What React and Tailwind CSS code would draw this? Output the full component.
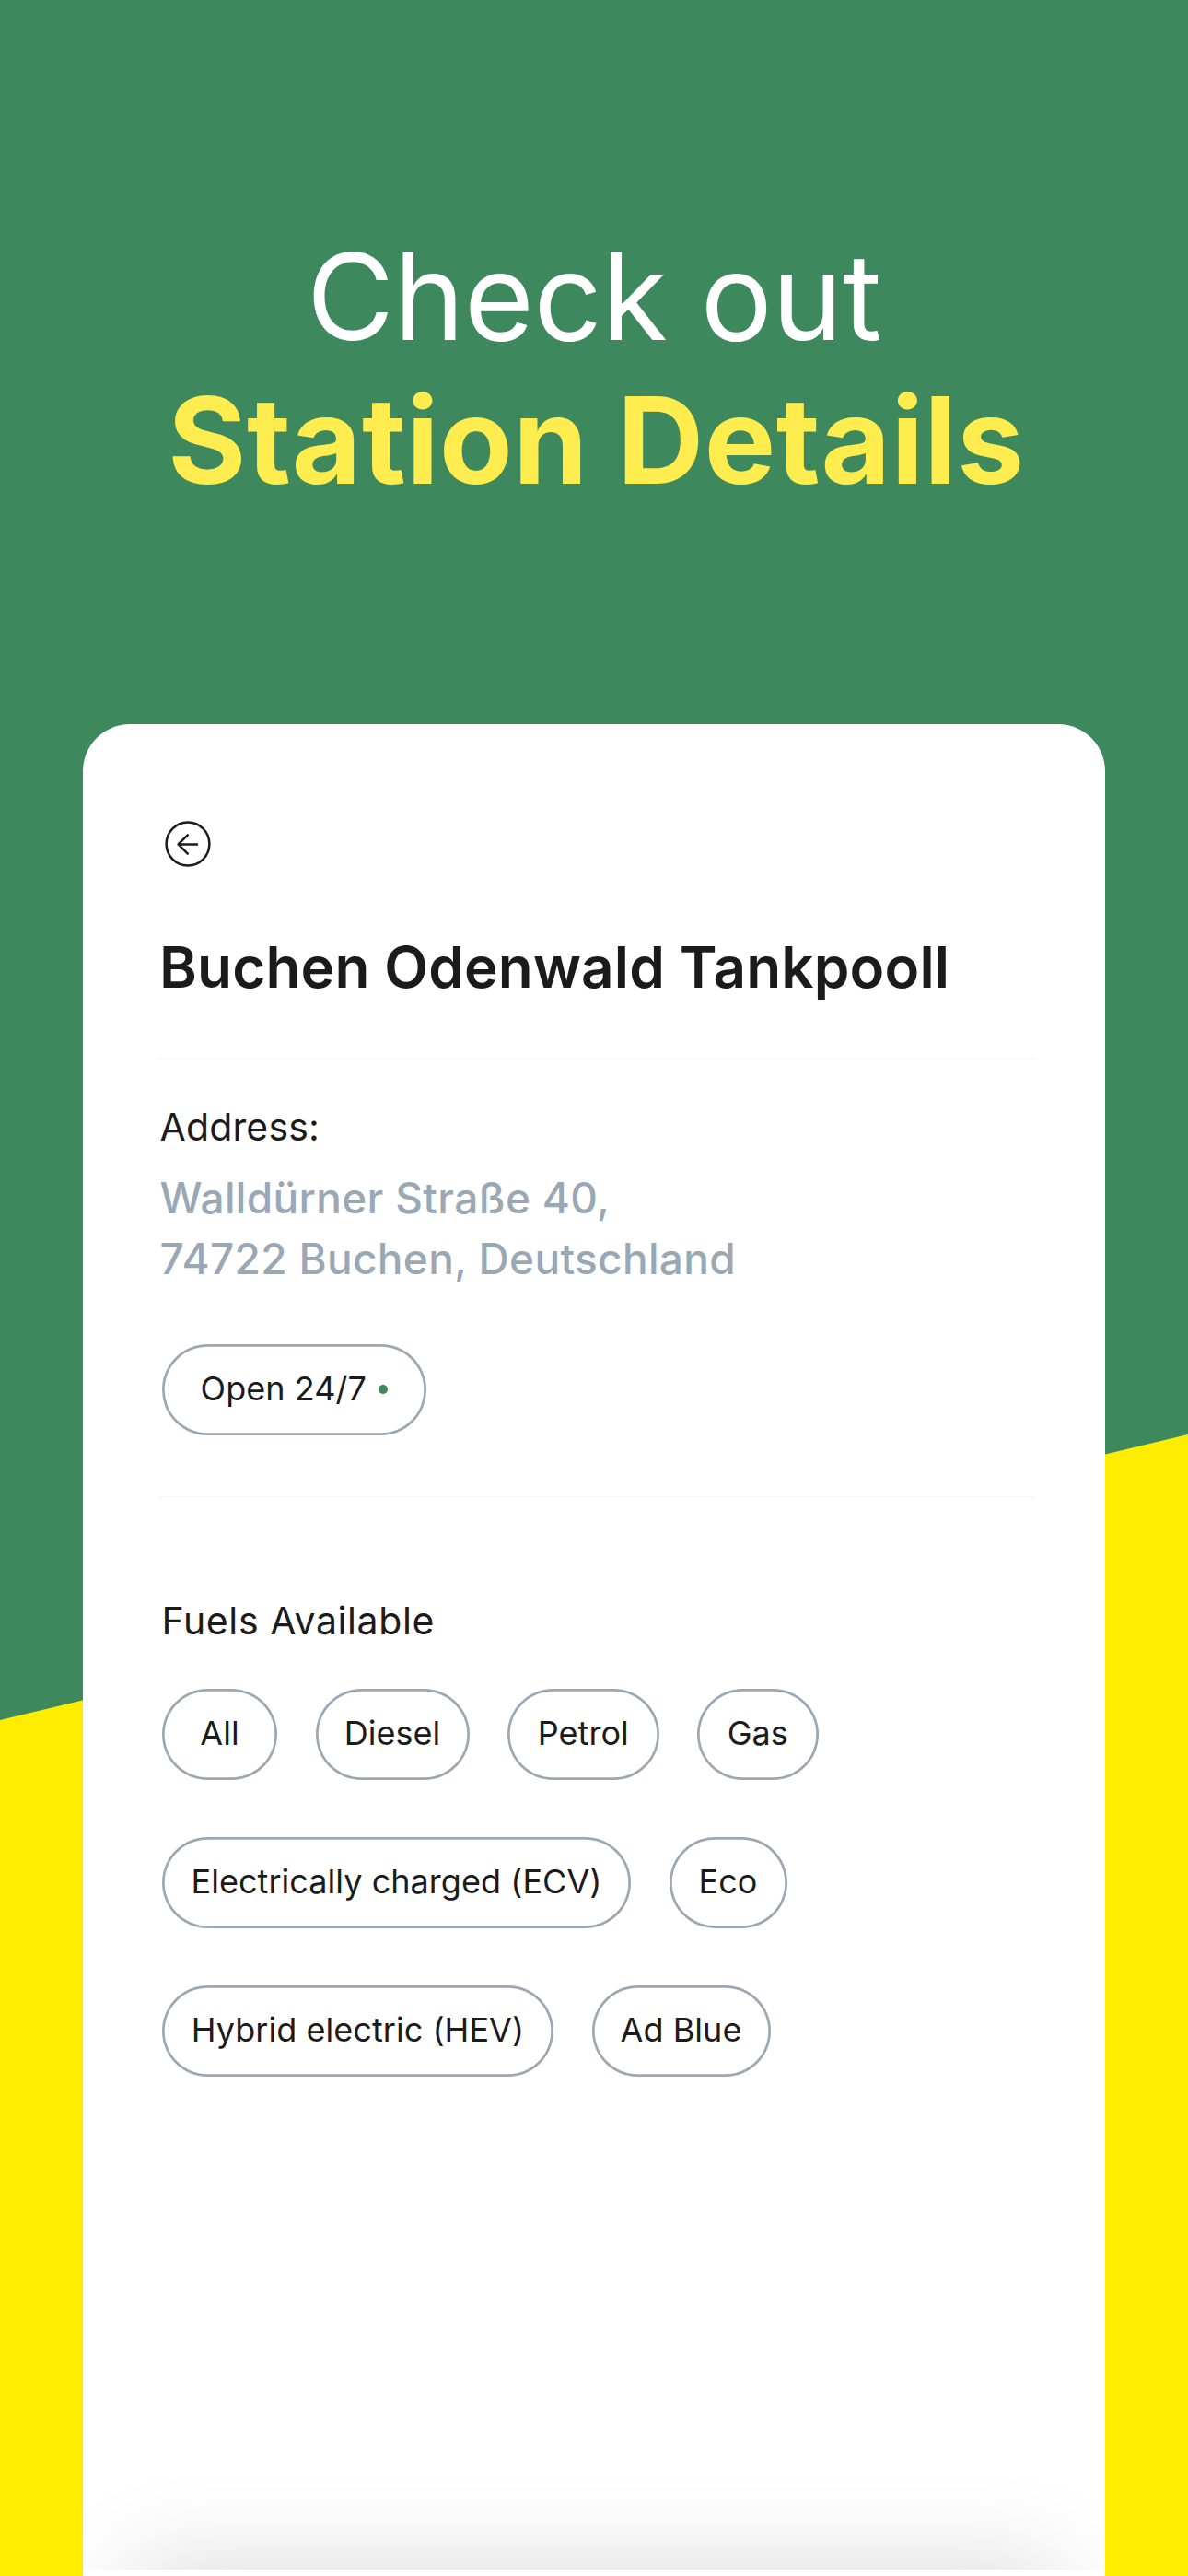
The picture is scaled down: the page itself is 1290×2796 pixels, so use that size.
const fuelRows = [
  [
    { name: 'All', width: 'w-[125px]' },
    { name: 'Diesel', width: 'w-[167px]' },
    { name: 'Petrol', width: 'w-[164.5px]' },
    { name: 'Gas', width: 'w-[131.5px]' },
  ],
  [
    { name: 'Electrically charged (ECV)', width: 'w-[509px]' },
    { name: 'Eco', width: 'w-[128px]' },
  ],
  [
    { name: 'Hybrid electric (HEV)', width: 'w-[425px]' },
    { name: 'Ad Blue', width: 'w-[194px]' },
  ],
];

function BackIcon() {
  return (
    <svg
      className="ml-[7px] size-[50px]"
      viewBox="0 0 50 50"
      fill="none"
      stroke="#1b1b1b"
      strokeWidth="2.5"
      strokeLinecap="round"
      strokeLinejoin="round"
    >
      <circle cx="25" cy="25" r="23.4" />
      <path d="M35 25.4H14.6M24.8 15.4L14.6 25.4L24.8 35.6" />
    </svg>
  );
}

function Pill({ className = '', children }) {
  return (
    <div
      className={`flex h-[99px] items-center justify-center rounded-full pb-[3px] text-[36px] tracking-[0.04px] whitespace-nowrap shadow-[inset_0_0_0_2.7px_#9ba7b2] ${className}`}
    >
      {children}
    </div>
  );
}

export default function App() {
  return (
    <div className="relative flex h-[2796px] w-[1290px] flex-col overflow-hidden bg-[#3d885d] font-['Inter',sans-serif] text-[#1b1b1b]">
      {/* slanted yellow backdrop */}
      <div className="absolute inset-x-0 bottom-0 h-[1239px] bg-[#feed00] [clip-path:polygon(0_310px,100%_0,100%_100%,0_100%)]" />

      <h1 className="mt-[244px] text-center text-[130px] leading-[156px] whitespace-nowrap">
        <span className="block font-normal tracking-[-0.33px] text-white">Check out</span>
        <span className="block pl-[5px] font-bold tracking-[0.6px] text-[#ffec4e]">Station Details</span>
      </h1>

      <main className="relative mx-[90px] mt-[230px] flex h-[2010px] flex-col overflow-hidden rounded-t-[51px] bg-white pt-[105px]">
        <div className="flex flex-col pr-[76px] pl-[82px]">
          <BackIcon />
          <h2 className="mt-[72px] ml-px text-[62px] leading-[74px] font-semibold tracking-[0.17px] whitespace-nowrap">
            Buchen Odenwald Tankpooll
          </h2>
          <div className="mt-[61px] h-[2px] bg-[#f8f8f8]" />

          <p className="mt-[48px] ml-[1.5px] text-[41px] leading-[50px] tracking-[0.15px]">Address:</p>
          <p className="mt-[19px] ml-[1.5px] text-[46px] leading-[66px] font-medium tracking-[0.32px] text-[#9aa8b5]">
            Walldürner Straße 40,
            <br />
            74722 Buchen, Deutschland
          </p>
          <Pill className="mt-[60px] ml-[4px] w-[287px] gap-[13px]">
            Open 24/7
            <span className="mt-[2px] size-[10.5px] rounded-full bg-[#3d885d]" />
          </Pill>
          <div className="mt-[66px] h-px bg-[#f5f5f5]" />

          <p className="mt-[109px] ml-[3.5px] text-[41px] leading-[50px] tracking-[0.62px]">Fuels Available</p>
          <div className="mt-[49px] ml-[4px] flex flex-col gap-[62px]">
            {fuelRows.map((row, i) => (
              <div key={i} className="flex gap-[41.5px]">
                {row.map((fuel) => (
                  <Pill key={fuel.name} className={fuel.width}>
                    {fuel.name}
                  </Pill>
                ))}
              </div>
            ))}
          </div>
        </div>

        {/* top edge of the bottom sheet */}
        <div className="mt-[535px] h-[400px] shrink-0 bg-white shadow-[0_-50px_110px_-50px_rgba(0,0,0,0.16)]" />
      </main>
    </div>
  );
}
